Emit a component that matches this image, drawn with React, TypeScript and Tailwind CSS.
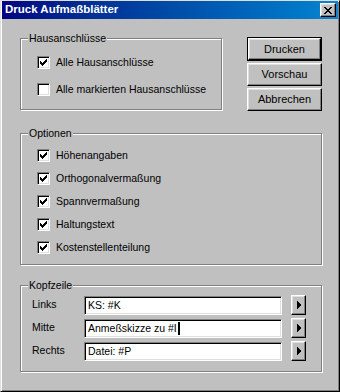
import type { ReactNode } from "react";

const CHECK = ["......X", ".....XX", "X...XXX", "XX.XXX.", "XXXXX..", ".XXX...", "..X...."];

function CheckMark() {
  return (
    <svg width="7" height="7" viewBox="0 0 7 7" shapeRendering="crispEdges">
      {CHECK.flatMap((row, y) =>
        row.split("").map((c, x) => (c === "X" ? <rect key={`${x}-${y}`} x={x} y={y} width="1" height="1" fill="#000" /> : null))
      )}
    </svg>
  );
}

function Checkbox({ label, checked }: { label: string; checked?: boolean }) {
  return (
    <div className="flex h-[13px] items-center">
      <span className="flex h-[13px] w-[13px] shrink-0 items-center justify-center border border-t-[#808080] border-l-[#808080] border-r-white border-b-white bg-white shadow-[inset_1px_1px_0_#000,inset_-1px_-1px_0_#dfdfdf]">
        {checked && <CheckMark />}
      </span>
      <span className="ml-[6px] leading-[13px]">{label}</span>
    </div>
  );
}

function GroupBox({ title, className, children }: { title: string; className: string; children: ReactNode }) {
  return (
    <div className={`relative border border-[#808080] shadow-[inset_1px_1px_0_#fff,1px_1px_0_#fff] ${className}`}>
      <span className="absolute -top-[7px] left-[7px] bg-[#c0c0c0] px-[1px] leading-[13px]">{title}</span>
      {children}
    </div>
  );
}

function Button({ label, isDefault }: { label: string; isDefault?: boolean }) {
  const face = (
    <div className="flex h-full w-full items-center justify-center border border-t-white border-l-white border-r-black border-b-black bg-[#c0c0c0] text-[11px] shadow-[inset_-1px_-1px_0_#808080,inset_1px_1px_0_#dfdfdf]">
      {label}
    </div>
  );
  if (isDefault) return <div className="h-[24px] w-[75px] border border-black">{face}</div>;
  return <div className="h-[23px] w-[75px]">{face}</div>;
}

function Field({ label, value, caret }: { label: string; value: string; caret?: boolean }) {
  return (
    <div className="flex h-[20px] items-center">
      <span className="w-[52px]">{label}</span>
      <div className="flex h-[19px] w-[198px] items-center border border-t-[#808080] border-l-[#808080] border-r-white border-b-white bg-white pl-[3px] shadow-[inset_1px_1px_0_#000,inset_-1px_-1px_0_#dfdfdf]">
        <span className="leading-[13px]">{value}</span>
        {caret && <span className="ml-[1px] h-[13px] w-[2px] bg-black" />}
      </div>
      <div className="ml-[9px] flex h-[20px] w-[15px] items-center justify-center border border-t-white border-l-white border-r-black border-b-black shadow-[inset_-1px_-1px_0_#808080,inset_1px_1px_0_#dfdfdf]">
        <svg width="4" height="8" viewBox="0 0 4 8" shapeRendering="crispEdges">
          <polygon points="0,0 4,4 0,8" fill="#000" />
        </svg>
      </div>
    </div>
  );
}

export default function App() {
  return (
    <div className="flex h-[392px] w-[340px] flex-col border border-t-[#dfdfdf] border-l-[#dfdfdf] border-r-black border-b-black bg-[#c0c0c0] font-['Liberation_Sans',Arial,sans-serif] text-[10.5px] text-black shadow-[inset_1px_1px_0_#fff,inset_-1px_-1px_0_#808080]">
      <div className="mx-[1px] flex h-[18px] shrink-0 items-center bg-gradient-to-r from-[#000080] to-[#1084d0] pl-[3px] pr-[2px]">
        <span className="text-[11.5px] font-bold text-white">Druck Aufmaßblätter</span>
        <div className="ml-auto flex h-[14px] w-[16px] items-center justify-center border border-t-white border-l-white border-r-black border-b-black bg-[#c0c0c0] shadow-[inset_-1px_-1px_0_#808080,inset_1px_1px_0_#dfdfdf]">
          <svg width="8" height="7" viewBox="0 0 8 7" shapeRendering="crispEdges">
            <path d="M0 0h2v1h-2zM6 0h2v1h-2zM1 1h2v1h-2zM5 1h2v1h-2zM2 2h4v1h-4zM3 3h2v1h-2zM2 4h4v1h-4zM1 5h2v1h-2zM5 5h2v1h-2zM0 6h2v1h-2zM6 6h2v1h-2z" fill="#000" />
          </svg>
        </div>
      </div>

      <div className="flex flex-col pl-[19px]">
        <div className="mt-[18px] flex items-start">
          <GroupBox title="Hausanschlüsse" className="mt-[1px] h-[72px] w-[202px]">
            <div className="flex flex-col gap-[14px] pl-[16px] pt-[17px]">
              <Checkbox label="Alle Hausanschlüsse" checked />
              <Checkbox label="Alle markierten Hausanschlüsse" />
            </div>
          </GroupBox>
          <div className="ml-[25px] flex flex-col gap-[2px]">
            <Button label="Drucken" isDefault />
            <Button label="Vorschau" />
            <Button label="Abbrechen" />
          </div>
        </div>

        <GroupBox title="Optionen" className="mt-[22px] h-[132px] w-[302px]">
          <div className="flex flex-col gap-[10px] pl-[16px] pt-[15px]">
            <Checkbox label="Höhenangaben" checked />
            <Checkbox label="Orthogonalvermaßung" checked />
            <Checkbox label="Spannvermaßung" checked />
            <Checkbox label="Haltungstext" checked />
            <Checkbox label="Kostenstellenteilung" checked />
          </div>
        </GroupBox>

        <GroupBox title="Kopfzeile" className="mt-[20px] h-[87px] w-[302px]">
          <div className="flex flex-col gap-[3px] pl-[11px] pt-[9px]">
            <Field label="Links" value="KS: #K" />
            <Field label="Mitte" value="Anmeßskizze zu #I" caret />
            <Field label="Rechts" value="Datei: #P" />
          </div>
        </GroupBox>
      </div>
    </div>
  );
}
